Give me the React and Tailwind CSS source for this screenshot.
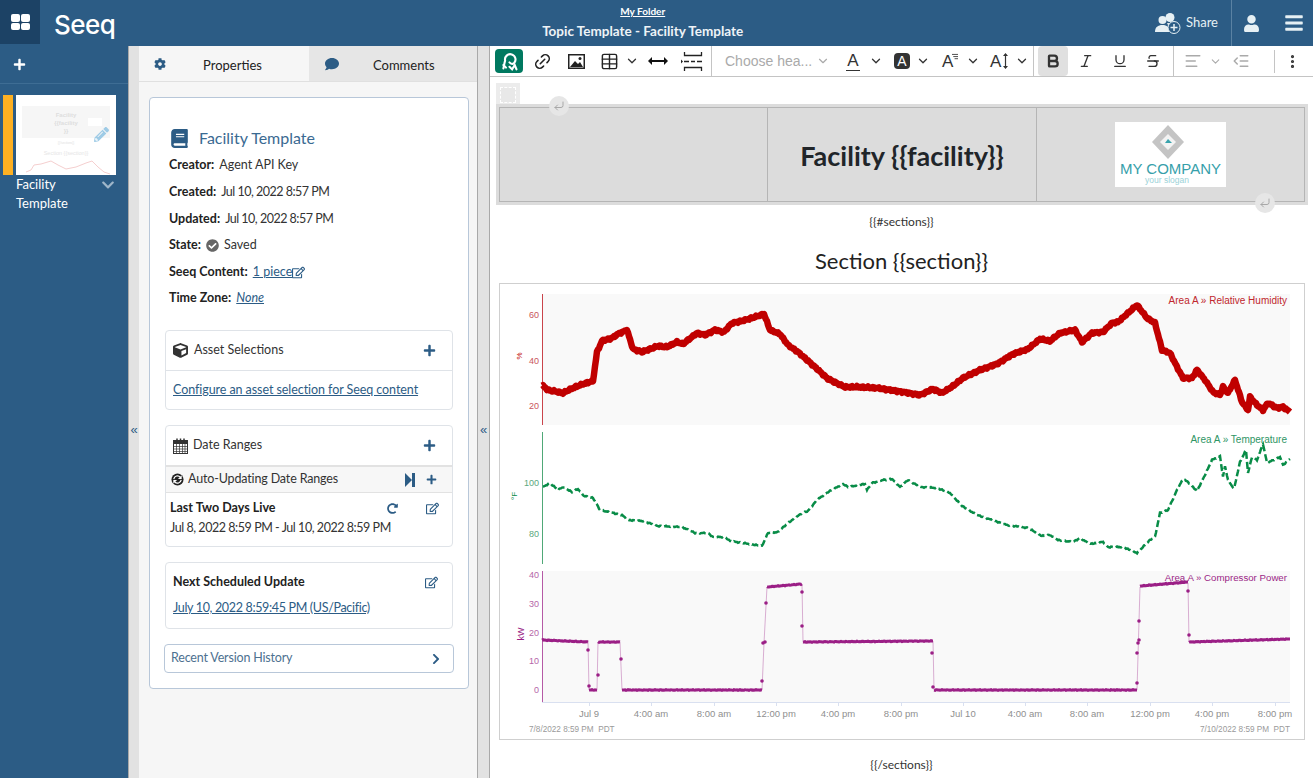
import React from "react";
import {
  FaCog, FaComment, FaBook, FaCube, FaPlus, FaCheckCircle, FaRegEdit, FaRedoAlt,
  FaChevronRight, FaChevronDown, FaUser, FaBars, FaPencilAlt,
} from "react-icons/fa";
import {
  Bold, Italic, Underline, Strikethrough, AlignLeft, Outdent, MoreVertical, ChevronDown,
  Link2, Table, CornerDownLeft,
} from "lucide-react";

// chart key points, in page pixels (the svg viewBox uses the same coordinates)
const RED = [[542,385],[548,390],[563,393],[573,388],[583,384],[593,381],[597,352],[602,341],[612,338],[618,334],[627,330],[633,349],[642,352],[658,346],[667,347],[677,342],[683,344],[697,333],[705,335],[715,330],[724,332],[732,323],[742,321],[758,316],[764,314],[770,330],[780,334],[788,345],[798,352],[815,367],[828,379],[845,387],[858,387],[877,388],[903,392],[920,395],[933,389],[942,393],[953,386],[963,378],[980,370],[997,364],[1013,354],[1028,349],[1040,339],[1050,341],[1060,333],[1075,330],[1082,342],[1092,333],[1103,332],[1112,323],[1118,322],[1137,305],[1147,318],[1155,323],[1162,350],[1170,353],[1177,367],[1183,378],[1192,378],[1197,370],[1205,380],[1213,392],[1220,395],[1223,387],[1228,393],[1235,380],[1242,402],[1248,410],[1250,397],[1257,405],[1263,410],[1268,403],[1277,408],[1283,407],[1290,412]];
const GREEN = [[543,487],[550,483],[558,490],[563,487],[572,492],[578,489],[584,496],[593,498],[600,510],[622,515],[628,520],[643,521],[658,526],[682,527],[695,533],[708,533],[713,537],[725,537],[730,541],[762,546],[768,533],[778,532],[788,523],[802,513],[808,511],[817,500],[828,492],[843,484],[848,487],[865,484],[867,490],[872,483],[883,480],[892,479],[900,487],[908,480],[920,487],[937,488],[950,493],[962,506],[977,515],[1007,525],[1028,528],[1042,536],[1050,535],[1058,540],[1073,542],[1080,538],[1090,544],[1103,542],[1108,547],[1123,547],[1137,553],[1150,540],[1155,537],[1160,513],[1168,510],[1177,490],[1183,479],[1188,482],[1197,491],[1205,475],[1212,460],[1220,456],[1223,477],[1225,466],[1228,480],[1234,489],[1240,462],[1246,450],[1248,473],[1252,457],[1257,460],[1263,444],[1267,463],[1280,457],[1283,465],[1290,459]];
const POWER = [[542,641],[588,641],[589,690],[597,690],[598,642],[620,642],[622,690],[762,690],[764,643],[767,587],[802,584],[803,642],[933,641],[934,690],[1137,690],[1140,587],[1188,583],[1189,642],[1290,639]];
const POWER_THICK = [
  [[542,640],[588,642]],[[589,690],[597,690]],[[598,642],[620,642]],[[622,690],[762,690]],
  [[767,587],[802,584]],[[803,642],[933,641]],[[934,690],[1137,690]],[[1140,586],[1188,582]],[[1189,642],[1290,639]],
];
const DOTS = [[588,650],[589,686],[598,675],[621,659],[762,681],[763,643],[765,642],[766,603],[802,592],[802,626],[932,653],[933,687],[1137,683],[1137,653],[1138,643],[1139,640],[1139,621],[1188,591],[1189,635]];
const X_TICKS = [[589,"Jul 9"],[651,"4:00 am"],[714,"8:00 am"],[776,"12:00 pm"],[838,"4:00 pm"],[901,"8:00 pm"],[963,"Jul 10"],[1025,"4:00 am"],[1087,"8:00 am"],[1150,"12:00 pm"],[1212,"4:00 pm"],[1275,"8:00 pm"]];

// adds a little repeatable jitter between key points
function wiggle(points, amp) {
  const out = [];
  for (let i = 0; i < points.length - 1; i++) {
    const [x0, y0] = points[i];
    const [x1, y1] = points[i + 1];
    const n = Math.max(1, Math.round(x1 - x0));
    for (let k = 0; k < n; k++) {
      const t = k / n;
      const x = x0 + (x1 - x0) * t;
      const noise = (Math.sin(x * 2.3) + Math.sin(x * 5.1 + 1)) * amp;
      out.push(`${x.toFixed(1)},${(y0 + (y1 - y0) * t + noise).toFixed(1)}`);
    }
  }
  out.push(points[points.length - 1].join(","));
  return out.join(" ");
}

const toStr = (pts) => pts.map((p) => p.join(",")).join(" ");

function Chart() {
  return (
    <svg viewBox="500 284 804 455" className="block w-full h-full" style={{ fontFamily: '"Liberation Sans", sans-serif' }}>
      <rect x="542" y="294" width="748" height="131" fill="#f9f9f9" />
      <rect x="542" y="571" width="748" height="131" fill="#f9f9f9" />
      <line x1="542.5" y1="294" x2="542.5" y2="425" stroke="#c9444b" />
      <line x1="542.5" y1="432" x2="542.5" y2="564" stroke="#4fa877" />
      <line x1="542.5" y1="571" x2="542.5" y2="702" stroke="#b55aa6" />
      <line x1="542" y1="702.5" x2="1290" y2="702.5" stroke="#d9e0f0" />

      <polyline points={wiggle(RED, 0.5)} fill="none" stroke="#c00000" strokeWidth="6.5" strokeLinejoin="round" />
      <polyline points={wiggle(GREEN, 0.3)} fill="none" stroke="#088c47" strokeWidth="2.5" strokeDasharray="7 3" />
      <polyline points={toStr(POWER)} fill="none" stroke="#9b1f86" strokeOpacity="0.35" strokeWidth="1" />
      {POWER_THICK.map((seg, i) => (
        <polyline key={i} points={wiggle(seg, 0.2)} fill="none" stroke="#9b1f86" strokeWidth="3" />
      ))}
      {DOTS.map(([x, y], i) => (
        <circle key={i} cx={x} cy={y} r="1.8" fill="#9b1f86" />
      ))}

      <g fontSize="9" fill="#c9555b" textAnchor="end">
        <text x="539" y="318">60</text>
        <text x="539" y="364">40</text>
        <text x="539" y="409">20</text>
      </g>
      <g fontSize="9" fill="#5aa87e" textAnchor="end">
        <text x="539" y="486">100</text>
        <text x="539" y="537">80</text>
      </g>
      <g fontSize="9" fill="#b565a8" textAnchor="end">
        <text x="539" y="578">40</text>
        <text x="539" y="607">30</text>
        <text x="539" y="636">20</text>
        <text x="539" y="664">10</text>
        <text x="539" y="693">0</text>
      </g>
      <text transform="translate(522 356) rotate(-90)" fontSize="8" fill="#c00000" textAnchor="middle">%</text>
      <text transform="translate(517 496) rotate(-90)" fontSize="8" fill="#088c47" textAnchor="middle">°F</text>
      <text transform="translate(524 634) rotate(-90)" fontSize="9" fill="#9b1f86" textAnchor="middle">kW</text>

      <g fontSize="10" textAnchor="end">
        <text x="1287" y="303.5" fill="#c0272d">Area A » Relative Humidity</text>
        <text x="1287" y="443" fill="#2f9565">Area A » Temperature</text>
        <text x="1287" y="581" fill="#9b1f86" fontSize="9.7">Area A » Compressor Power</text>
      </g>

      {X_TICKS.map(([x, label]) => (
        <g key={x + label}>
          <line x1={x + 0.5} y1="702" x2={x + 0.5} y2="706" stroke="#d9e0f0" />
          <text x={x} y="717" fontSize="9.5" fill="#8f8f8f" textAnchor="middle">{label}</text>
        </g>
      ))}
      <text x="529" y="732" fontSize="8.200" fill="#9a9a9a" style={{ whiteSpace: "pre" }}>7/8/2022 8:59 PM  PDT</text>
      <text x="1290" y="732" fontSize="8.200" fill="#9a9a9a" textAnchor="end" style={{ whiteSpace: "pre" }}>7/10/2022 8:59 PM  PDT</text>
    </svg>
  );
}

function CompanyLogo() {
  return (
    <svg viewBox="0 0 111 65" className="w-[111px] h-[65px] bg-white block" style={{ fontFamily: '"Liberation Sans", sans-serif' }}>
      <polygon points="53,3 69,20 53,37 37,20" fill="#c4c4c4" />
      <polygon points="53,12 61,20 53,28 45,20" fill="#f3f3f3" />
      <polygon points="53,17 57,21 50,21" fill="#3aa3ad" />
      <text x="55.500" y="52" fontSize="15" fill="#36a0aa" textAnchor="middle">MY COMPANY</text>
      <text x="52" y="61" fontSize="8.500" fill="#9bd2d8" textAnchor="middle">your slogan</text>
    </svg>
  );
}

function Thumbnail() {
  return (
    <svg viewBox="0 0 100 80" className="w-[100px] h-[80px] bg-white block" style={{ fontFamily: '"Liberation Sans", sans-serif' }}>
      <rect x="6" y="11" width="88" height="32" fill="#f6f6f6" />
      <rect x="72" y="23" width="14" height="8" fill="#fff" />
      <g fontSize="6" fontWeight="700" fill="#dedede" textAnchor="middle">
        <text x="50" y="22">Facility</text>
        <text x="50" y="30">{"{{facility"}</text>
        <text x="50" y="38">{"}}"}</text>
      </g>
      <text x="50" y="49" fontSize="3" fill="#e0e0e0" textAnchor="middle">{"{{#sections}}"}</text>
      <text x="50" y="60" fontSize="5.500" fill="#e6e6e6" textAnchor="middle">{"Section {{section}}"}</text>
      <polyline points="10,77 15,75 18,70 25,69 35,66 42,70 50,74 60,72 70,68 76,66 82,72 88,77 94,79" fill="none" stroke="#f5cfcf" strokeWidth="1" />
    </svg>
  );
}

function ShareIcon() {
  return (
    <svg viewBox="0 0 26 22" className="w-[26px] h-[22px]" fill="#e6f0f4">
      <circle cx="7.500" cy="8" r="4" />
      <path d="M0 20c0-5 3-7 7.500-7s7 2 7 7z" />
      <circle cx="15" cy="5.500" r="4.500" />
      <path d="M12 11h6c3 0 5 1.500 5.500 4H14z" />
      <circle cx="19" cy="15.500" r="6" fill="#2c5c85" stroke="#e6f0f4" strokeWidth="1" />
      <path d="M19 12v7M15.500 15.500h7" stroke="#e6f0f4" strokeWidth="1.500" />
    </svg>
  );
}

function AutoUpdateIcon() {
  return (
    <svg viewBox="0 0 14 14" className="w-[13px] h-[13px]">
      <circle cx="7" cy="7" r="6.500" fill="#222" />
      <path d="M3 6.500a4 4 0 0 1 7-2" fill="none" stroke="#fff" strokeWidth="1.300" />
      <path d="M11 7.500a4 4 0 0 1-7 2" fill="none" stroke="#fff" strokeWidth="1.300" />
      <path d="M7.500 6.500 11.500 2.500V6.500zM6.500 7.500 2.500 11.500V7.500z" fill="#fff" />
    </svg>
  );
}

function CalendarIcon() {
  return (
    <svg viewBox="0 0 15 16" className="w-[15px] h-4" fill="none" stroke="#333" strokeWidth="1">
      <rect x="0.500" y="2.500" width="14" height="13" fill="#fff" />
      <rect x="0.500" y="2.500" width="14" height="3" fill="#333" />
      <path d="M4 0.500v4M7.500 0.500v4M11 0.500v4" strokeWidth="1.500" />
      <path d="M0.500 8.500h14M0.500 11h14M0.500 13.500h14M3.500 5.500v10M6.500 5.500v10M9.500 5.500v10M12 5.500v10" strokeWidth="0.700" />
    </svg>
  );
}

function StepIcon() {
  return (
    <svg viewBox="0 0 10 14" className="w-[10px] h-[14px]" fill="#2c5c85">
      <polygon points="0,0 7,7 0,14" />
      <rect x="7" y="0" width="3" height="14" />
    </svg>
  );
}

function SeeqGlyph() {
  return (
    <svg viewBox="0 0 24 24" className="w-[21px] h-[21px]" fill="none" stroke="#fff" strokeWidth="2.400" strokeLinecap="round">
      <path d="M5 20c1-4 1-6 2-9a6 6 0 1 1 10 3c-2 2-4 0-5-1" />
      <path d="M12 18l3 3 3-5 2 5" />
      <path d="M5 16l3 3" />
    </svg>
  );
}

function TextAIcon({ children }) {
  return <span className="text-[17px] leading-none text-[#333]" style={{ fontFamily: '"Liberation Sans", sans-serif' }}>{children}</span>;
}

function Chevron({ className = "" }) {
  return (
    <div className={"w-[9px] flex justify-center " + className}>
      <ChevronDown size={14} strokeWidth={2.200} className="text-[#333] shrink-0" />
    </div>
  );
}

function Toolbar() {
  return (
    <div className="h-[31px] flex items-center border-b border-[#c4c4c4] bg-white shrink-0">
      <div className="ml-[5px] w-[28px] h-[24px] rounded bg-[#007960] flex items-center justify-center shrink-0"><SeeqGlyph /></div>
      <div className="w-[38px] flex justify-center"><Link2 size={19} strokeWidth={2} className="-rotate-45 text-[#222]" /></div>
      <div className="w-[30px] flex justify-center">
        <svg viewBox="0 0 17 15" className="w-[17px] h-[15px]"><rect x="0.750" y="0.750" width="15.500" height="13.500" fill="#fff" stroke="#222" strokeWidth="1.500" /><path d="M2 13 7 7l3 3 2-2 3 5z" fill="#222" /><circle cx="12" cy="4.500" r="1.500" fill="#222" /></svg>
      </div>
      <div className="w-[36px] flex justify-center"><Table size={19} strokeWidth={1.800} className="text-[#222]" /></div>
      <Chevron />
      <div className="w-[44px] flex justify-center">
        <svg viewBox="0 0 20 8" className="w-5 h-2"><path d="M2 4h16" stroke="#111" strokeWidth="2" /><path d="M0 4l4-4v8zM20 4l-4-4v8z" fill="#111" /></svg>
      </div>
      <div className="w-[24px] flex justify-center">
        <svg viewBox="0 0 22 19" className="w-[22px] h-[19px]" fill="none" stroke="#222" strokeWidth="1.300"><path d="M3.500 0v3.500h17V0M3.500 19v-3.500h17V19" /><path d="M3 9.500h5M10 9.500h4M16 9.500h5" strokeWidth="1.500" /><path d="M0 7.500l2 2-2 2z" fill="#222" stroke="none" /></svg>
      </div>
      <div className="ml-[7px] w-px h-full bg-[#c4c4c4]" />
      <div className="w-[126px] flex items-center pl-[13px] text-[14px] text-[#aaa]" style={{ fontFamily: '"Liberation Sans", sans-serif' }}>
        <span className="w-[91px] whitespace-nowrap">Choose hea...</span>
        <ChevronDown size={14} className="text-[#aaa]" />
      </div>
      <div className="ml-[6px] w-[18px] flex flex-col items-center">
        <TextAIcon>A</TextAIcon>
        <div className="w-[14px] h-px bg-[#333] mt-[1px]" />
      </div>
      <Chevron className="ml-[9px]" />
      <div className="ml-[14px] w-4 h-4 rounded-sm bg-[#333] flex items-center justify-center">
        <span className="text-[14px] leading-none text-white" style={{ fontFamily: '"Liberation Sans", sans-serif' }}>A</span>
      </div>
      <Chevron className="ml-[8px]" />
      <div className="ml-[15px] w-[18px] flex items-center">
        <TextAIcon>A</TextAIcon>
        <svg viewBox="0 0 7 8" className="w-[6px] h-2 -ml-[1px] -mt-2" stroke="#333" strokeWidth="1"><path d="M0 1h7M1.500 3.500h5.500M3 6h4" /></svg>
      </div>
      <Chevron className="ml-[8px]" />
      <div className="ml-[13px] w-5 flex items-center">
        <TextAIcon>A</TextAIcon>
        <svg viewBox="0 0 7 16" className="w-[7px] h-4 ml-[1px]"><path d="M3.500 1v14" stroke="#333" strokeWidth="1.200" /><path d="M3.500 0 6 3H1zM3.500 16 6 13H1z" fill="#333" /></svg>
      </div>
      <Chevron className="ml-[7px]" />
      <div className="ml-[7px] w-px h-full bg-[#c4c4c4]" />
      <div className="ml-[4px] w-[30px] h-full bg-[#e0e0e0] rounded-sm flex items-center justify-center"><Bold size={16} strokeWidth={3.500} className="text-[#333]" /></div>
      <div className="ml-[3px] w-[30px] flex justify-center"><Italic size={16} className="text-[#333]" /></div>
      <div className="ml-[4px] w-[30px] flex justify-center"><Underline size={16} className="text-[#333]" /></div>
      <div className="ml-[3px] w-[30px] flex justify-center"><Strikethrough size={16} className="text-[#333]" /></div>
      <div className="ml-[5px] w-px h-full bg-[#c4c4c4]" />
      <AlignLeft size={18} className="ml-[10px] text-[#aaa]" />
      <ChevronDown size={13} className="ml-[7px] text-[#aaa]" />
      <Outdent size={18} className="ml-[10px] text-[#aaa]" />
      <div className="ml-[24px] w-px h-[23px] bg-[#c4c4c4]" />
      <MoreVertical size={17} strokeWidth={2.500} className="ml-[9px] text-[#333]" />
    </div>
  );
}

function ReturnButton({ className }) {
  return (
    <div className={"absolute w-5 h-5 rounded-full bg-[#e6e6e6] flex items-center justify-center " + className}>
      <CornerDownLeft size={12} strokeWidth={2} className="text-[#a8a8a8]" />
    </div>
  );
}

function Editor() {
  return (
    <div className="flex-1 min-w-0 bg-white flex flex-col overflow-hidden" style={{ fontFamily: '"Lato", sans-serif' }}>
      <Toolbar />
      <div className="relative flex-1">
        <div className="ml-[6px] mt-[6px] w-6 h-[21px] bg-[#ececec] p-[4px] pb-0">
          <div className="w-4 h-4 border border-dashed border-white bg-[#e8e8e8]" />
        </div>
        <div className="ml-[6px] w-[812px] h-[101px] bg-[#dcdcdc] p-[3px]">
          <div className="h-full grid grid-cols-[268px_269px_1fr] border border-[#b5b5b5]">
            <div className="border-r border-[#b5b5b5]" />
            <div className="border-r border-[#b5b5b5] flex items-center justify-center pt-[4px]">
              <span className="text-[27px] font-bold text-[#212529] whitespace-nowrap">{"Facility {{facility}}"}</span>
            </div>
            <div className="flex items-center justify-center"><CompanyLogo /></div>
          </div>
        </div>
        <ReturnButton className="left-[59px] top-[19px]" />
        <ReturnButton className="left-[765px] top-[116px]" />
        <div className="mt-[8px] h-[18px] text-center text-[12px] leading-[18px] text-[#333]">{"{{#sections}}"}</div>
        <div className="mt-[15px] h-[30px] text-center text-[22px] leading-[30px] text-[#222]">{"Section {{section}}"}</div>
        <div className="mt-[7px] ml-[9px] w-[806px] h-[457px] border border-[#cfcfcf]"><Chart /></div>
        <div className="mt-[16px] h-[18px] text-center text-[12px] leading-[18px] text-[#333]">{"{{/sections}}"}</div>
      </div>
    </div>
  );
}

function Row({ children }) {
  return <div className="h-[26.6px] pt-[1px] flex items-center text-[12.500px] text-[#333] whitespace-nowrap">{children}</div>;
}

function Label({ children }) {
  return <span className="font-bold text-[#222] mr-[5px]">{children}</span>;
}

function PropertiesPanel() {
  return (
    <div className="w-[338px] bg-[#f6f6f6] shrink-0">
      <div className="h-[36px] flex border-b border-[#e0e0e0]">
        <div className="w-[170px] bg-[#f6f6f6] flex pl-[15px] pt-[11px] text-[13px] text-[#222]">
          <FaCog size={12} className="text-[#2c5c85] mt-[1px]" />
          <span className="ml-[37px] -mt-[1px]">Properties</span>
        </div>
        <div className="flex-1 bg-[#e6e6e6] flex pl-[16px] pt-[11px] text-[13px] text-[#222]">
          <FaComment size={14} className="text-[#2c5c85]" />
          <span className="ml-[34px] -mt-[1px]">Comments</span>
        </div>
      </div>
      <div className="ml-[10px] mt-[15px] w-[320px] h-[592px] bg-white border border-[#b8c7d9] rounded-sm px-[15px] pt-[28px]">
        <div className="h-[24px] flex items-center pl-[5px]">
          <FaBook size={19} className="text-[#2c5c85]" />
          <span className="ml-[10px] text-[16px] text-[#3a6a92]">Facility Template</span>
        </div>
        <div className="pl-[4px] mt-[2px]">
          <Row><Label>Creator:</Label>Agent API Key</Row>
          <Row><Label>Created:</Label><span className="tracking-[-0.5px]">Jul 10, 2022 8:57 PM</span></Row>
          <Row><Label>Updated:</Label><span className="tracking-[-0.5px]">Jul 10, 2022 8:57 PM</span></Row>
          <Row><Label>State:</Label><FaCheckCircle size={13} className="text-[#666] mr-[5px]" />Saved</Row>
          <Row><Label>Seeq Content:</Label><span className="underline text-[#2c5c85]">1 piece</span><FaRegEdit size={13} className="text-[#2c5c85]" /></Row>
          <Row><Label>Time Zone:</Label><span className="italic underline text-[#2c5c85]">None</span></Row>
        </div>

        <div className="mt-[18px] h-[80px] border border-[#dfe3e8] rounded">
          <div className="h-[40px] pt-[1px] border-b border-[#dfe3e8] flex items-center pl-[7px] pr-[16px] text-[12.500px] text-[#333]">
            <FaCube size={15} className="text-[#333]" />
            <span className="ml-[6px] flex-1">Asset Selections</span>
            <FaPlus size={13} className="text-[#2c5c85]" />
          </div>
          <div className="h-[38px] pt-[2px] flex items-center pl-[7px] text-[12.500px] tracking-[-0.07px] text-[#2c5c85] underline">Configure an asset selection for Seeq content</div>
        </div>

        <div className="mt-[15px] h-[122px] border border-[#dfe3e8] rounded">
          <div className="h-[39px] pt-[1px] flex items-center pl-[7px] pr-[16px] text-[12.500px] text-[#333]">
            <CalendarIcon />
            <span className="ml-[5px] flex-1">Date Ranges</span>
            <FaPlus size={13} className="text-[#2c5c85]" />
          </div>
          <div className="h-[28px] pt-[1px] bg-[#f7f7f7] border-t-2 border-b border-[#e2e2e2] flex items-center pl-[5px] pr-[15px] text-[12.500px] text-[#333]">
            <AutoUpdateIcon />
            <span className="ml-[4px] flex-1 tracking-[-0.15px]">Auto-Updating Date Ranges</span>
            <StepIcon />
            <FaPlus size={11} className="ml-[11px] text-[#2c5c85]" />
          </div>
          <div className="pl-[4px] pr-[13px] pt-[7px] text-[12.500px]">
            <div className="h-[18px] flex items-center">
              <span className="font-bold text-[#222] flex-1">Last Two Days Live</span>
              <FaRedoAlt size={11} className="text-[#2c5c85]" />
              <FaRegEdit size={13} className="ml-[28px] text-[#2c5c85]" />
            </div>
            <div className="h-[20px] pt-[1px] flex items-center text-[#333] whitespace-nowrap tracking-[-0.45px]">Jul 8, 2022 8:59 PM - Jul 10, 2022 8:59 PM</div>
          </div>
        </div>

        <div className="mt-[15px] h-[67px] border border-[#dfe3e8] rounded pl-[7px] pr-[14px] pt-[9px] text-[12.500px]">
          <div className="h-[20px] pt-[1px] flex items-center">
            <span className="font-bold text-[#222] flex-1">Next Scheduled Update</span>
            <FaRegEdit size={13} className="text-[#2c5c85]" />
          </div>
          <div className="mt-[6px] h-[20px] pt-[1px] flex items-center text-[#2c5c85] underline whitespace-nowrap tracking-[-0.33px]">July 10, 2022 8:59:45 PM (US/Pacific)</div>
        </div>

        <div className="mt-[15px] -mx-px h-[29px] pt-[1px] border border-[#b8c7d9] rounded flex items-center pl-[6px] pr-[11px] text-[12.500px] tracking-[-0.18px] text-[#4d7190]">
          <span className="flex-1">Recent Version History</span>
          <FaChevronRight size={12} className="text-[#2c5c85]" />
        </div>
      </div>
    </div>
  );
}

function Strip({ className }) {
  return (
    <div className={"bg-[#e2e2e2] shrink-0 flex justify-center pt-[377px] text-[13px] leading-none text-[#2c5c85] border-[#a9a9a9] " + className} style={{ fontFamily: '"Liberation Sans", sans-serif' }}>
      «
    </div>
  );
}

export default function App() {
  return (
    <div className="w-[1313px] h-[778px] overflow-hidden flex flex-col bg-[#2c5c85]" style={{ fontFamily: '"Lato", sans-serif' }}>
      <div className="h-[46px] shrink-0 flex text-white">
        <div className="w-[40px] h-[44px] bg-[#1c4265] flex items-center justify-center">
          <div className="grid grid-cols-2 gap-[1px] w-[19px] h-[16px]">
            <div className="bg-white rounded-[2px]" /><div className="bg-white rounded-[2px]" />
            <div className="bg-white rounded-[2px]" /><div className="bg-white rounded-[2px]" />
          </div>
        </div>
        <div className="ml-[14px] mt-[9px] text-[26px] leading-[32px] tracking-[-0.5px] font-medium" style={{ fontFamily: '"Inter", sans-serif' }}>Seeq</div>
        <div className="flex-1 flex flex-col items-center pt-[4px] pl-[15px]">
          <span className="text-[10px] leading-[14px] font-bold underline">My Folder</span>
          <span className="mt-[4px] text-[13.500px] leading-[18px] font-bold text-[#eef3f7]">Topic Template - Facility Template</span>
        </div>
        <div className="flex items-center h-full">
          <ShareIcon />
          <span className="ml-[5px] w-[45px] text-[13px] text-[#e6f0f4]">Share</span>
          <div className="w-px h-full bg-[#5a82a3]" />
          <FaUser size={17} className="ml-[11px] text-[#e6f0f4]" />
          <FaBars size={20} className="ml-[24px] mr-[9px] text-[#e6f0f4]" />
        </div>
      </div>

      <div className="flex-1 flex min-h-0">
        <div className="w-[128px] shrink-0 text-white">
          <div className="h-[38px] border-b border-[#3e6d94] flex items-center pl-[13px]">
            <FaPlus size={13} />
          </div>
          <div className="mt-[11px] flex pl-[3px]">
            <div className="w-[10px] h-[80px] bg-[#fdb022]" />
            <div className="ml-[3px] relative">
              <Thumbnail />
              <FaPencilAlt size={15} className="absolute left-[78px] top-[32px] text-[#9ecbe6]" />
            </div>
          </div>
          <div className="pl-[16px] pr-[13px] flex text-[13px] leading-[19px]">
            <div className="flex-1">Facility<br />Template</div>
            <FaChevronDown size={14} className="mt-[3px] text-[#9fb6c9]" />
          </div>
        </div>
        <Strip className="w-[11px] border-l" />
        <PropertiesPanel />
        <Strip className="w-[13px] border-x" />
        <Editor />
      </div>
    </div>
  );
}
